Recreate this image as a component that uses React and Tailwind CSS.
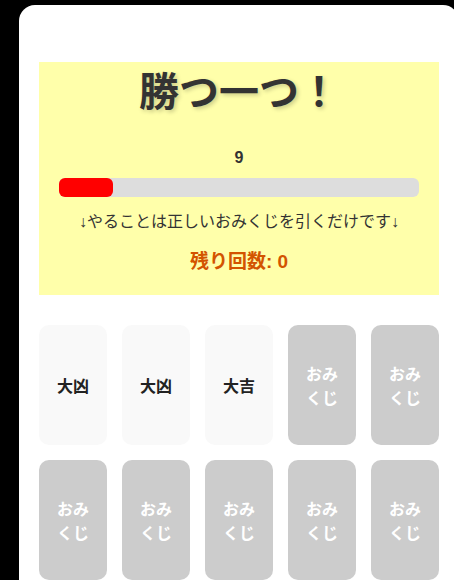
import React from 'react';

const cards = [
  { label: '大凶', open: true },
  { label: '大凶', open: true },
  { label: '大吉', open: true },
  { label: 'おみくじ', open: false },
  { label: 'おみくじ', open: false },
  { label: 'おみくじ', open: false },
  { label: 'おみくじ', open: false },
  { label: 'おみくじ', open: false },
  { label: 'おみくじ', open: false },
  { label: 'おみくじ', open: false },
];

export default function App() {
  const progress = 15; // percent of bar filled

  return (
    <div
      className="min-h-[580px] w-[454px] overflow-hidden bg-black pt-[5px] pl-[19px]"
      style={{ fontFamily: '"Liberation Sans", "Noto Sans CJK JP", sans-serif' }}
    >
      <div className="w-[440px] rounded-2xl bg-white px-5 pt-[57px] pb-10">
        {/* status panel */}
        <div className="bg-[#ffffaa] px-5 pb-[19px] text-center text-[#333]">
          <h1 className="text-[40px] font-bold leading-[60px] [text-shadow:2px_2px_4px_rgba(0,0,0,0.2)]">
            勝つ一つ！
          </h1>
          <div className="mt-[26px] text-[16px] font-bold leading-5">9</div>
          <div className="mt-[10px] h-[19px] w-full rounded-md bg-[#dddddd]">
            <div className="h-full rounded-md bg-[#ff0000]" style={{ width: `${progress}%` }} />
          </div>
          <p className="mt-[13px] text-[16px] leading-6">↓やることは正しいおみくじを引くだけです↓</p>
          <p className="mt-[14px] text-[19px] font-bold leading-7 text-[#d35400]">残り回数: 0</p>
        </div>

        {/* omikuji cards */}
        <div className="mt-[30px] grid grid-cols-5 gap-[15px]">
          {cards.map((c, i) => (
            <div
              key={i}
              className={`flex h-[120px] items-center justify-center rounded-[10px] px-3 pt-1 text-center text-[16px] font-bold leading-6 ${
                c.open ? 'bg-[#f9f9f9] text-[#222]' : 'bg-[#cccccc] text-white'
              }`}
            >
              {c.label}
            </div>
          ))}
        </div>
      </div>
    </div>
  );
}
